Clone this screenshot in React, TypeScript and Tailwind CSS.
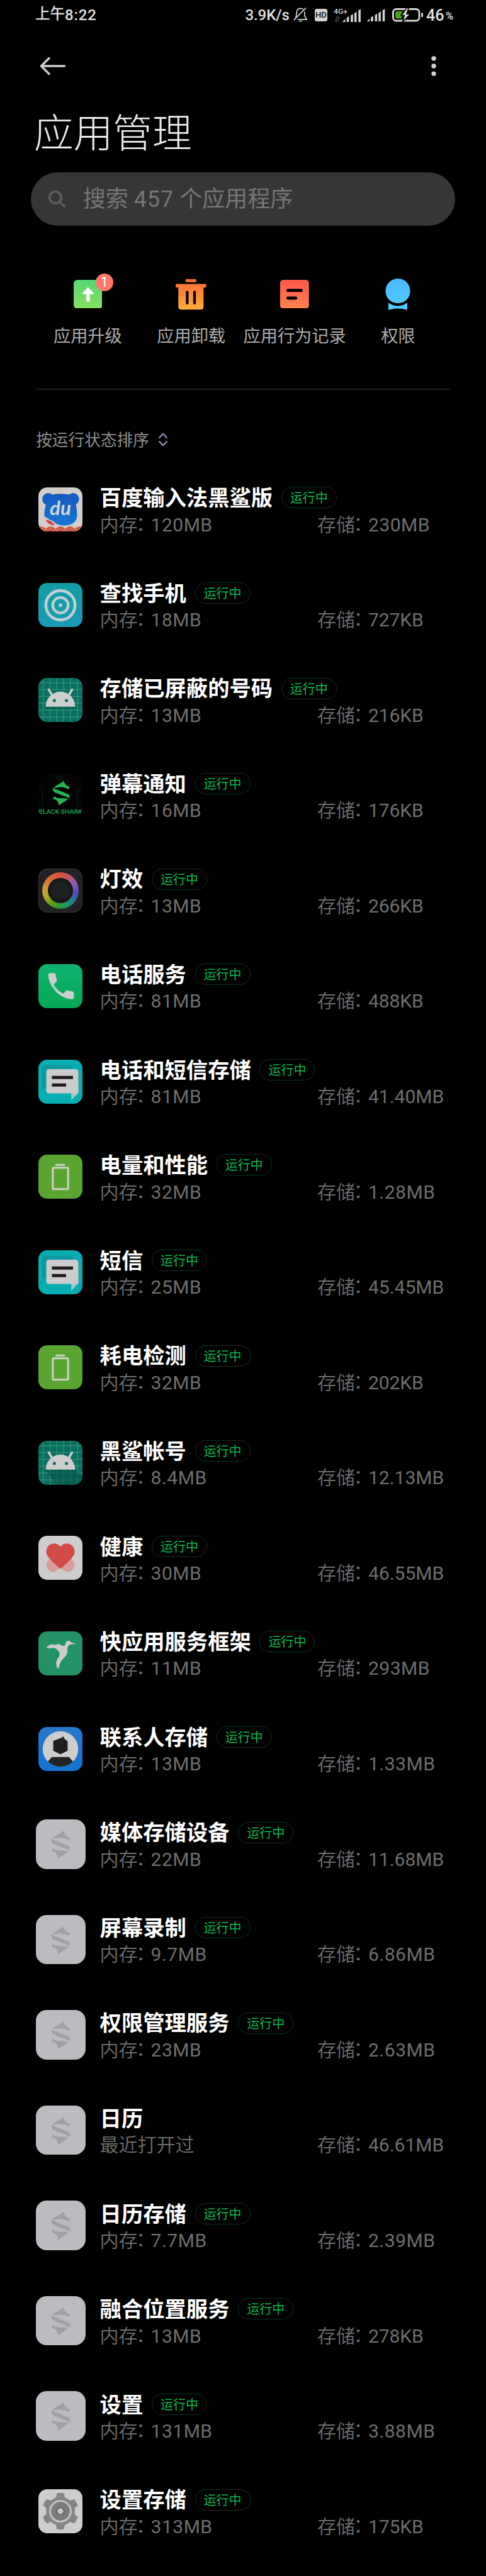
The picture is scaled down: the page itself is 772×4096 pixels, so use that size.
import React from "react";

const SHARK = (
  <>
    <path d="M60 25L67 36L77 41.5L72 46.5Q66 41.5 52 41L36 43Q42 37 52 32Q58 29 60 25Z" />
    <path d="M35 43L40 45.5L73 59Q77 62 76 69L40 55Q33 51 35 43Z" />
    <path d="M34 70L40 63.5Q41 69 50 69L73 70Q66 77 60 80L49.500 87L47.500 78Q42 72 34 70Z" />
  </>
);

function Tile({ bg, children }: { bg: string; children?: React.ReactNode }) {
  return (
    <div className={`h-[70px] w-[70px] overflow-hidden rounded-[14px] ${bg}`}>
      <svg viewBox="0 0 98 98" className="block h-full w-full">
        {children}
      </svg>
    </div>
  );
}

function BaiduIcon() {
  return (
    <Tile bg="bg-[#d2cecb]">
      <g fill="none" stroke="#d8c39a" strokeWidth="1.300">
        <path d="M34 22L49 4L64 22M4 40L-2 50L14 68M94 36L100 48L86 66" />
      </g>
      <g fill="#155fc4">
        <circle cx="22" cy="26" r="13.500" />
        <circle cx="77" cy="26" r="13.500" />
      </g>
      <path
        d="M30 16Q49 13 69 16Q84 24 84 42Q86 50 86 63Q85 84 57 85Q40 85 34 76Q24 72 13 64Q13 50 16 42Q15 26 30 16Z"
        fill="url(#baiduBody)"
      />
      <defs>
        <linearGradient id="baiduBody" x1="0" y1="0" x2="0" y2="1">
          <stop offset="0" stopColor="#1559bf" />
          <stop offset="1" stopColor="#1877d6" />
        </linearGradient>
      </defs>
      <path d="M16 72Q30 73 36 84Q22 84 16 72Z" fill="#c9403f" />
      <text x="49" y="62" textAnchor="middle" fontSize="44" fontWeight="700" fontStyle="italic" fill="#d3d6da" className="font-['Lato']">
        du
      </text>
      <g fill="#c94b3d" stroke="#dd9a78" strokeWidth="1.500">
        {[6, 49, 92, 27, 70].map((x) => (
          <g key={x}>
            <circle cx={x} cy="100" r="13" />
            <circle cx={x} cy="100" r="8" />
          </g>
        ))}
      </g>
    </Tile>
  );
}

function FindIcon() {
  return (
    <Tile bg="bg-linear-to-b from-[#129da2] to-[#1a9ab6]">
      <g fill="none" stroke="#bfcfcf">
        <circle cx="49" cy="49.500" r="32.500" strokeWidth="6.500" />
        <circle cx="49" cy="49.500" r="17.200" strokeWidth="6" />
      </g>
      <circle cx="49" cy="49.500" r="4" fill="#c9cfcf" />
    </Tile>
  );
}

function AndroidIcon({ shadow }: { shadow?: boolean }) {
  return (
    <Tile bg="bg-[#08705f]">
      <path
        d="M10.500 0V98M26 0V98M41 0V98M56 0V98M71.500 0V98M87 0V98M0 11H98M0 26H98M0 41H98M0 56H98M0 71.500H98M0 87H98"
        stroke="#4f9d8e"
        strokeWidth="1.200"
      />
      {shadow ? <path d="M16 64H82L98 80V98H40Z" fill="#035246" opacity=".55" /> : <path d="M16 64H82L80 69H20Z" fill="#035246" opacity=".5" />}
      <path d="M23 26L31 39M75 26L67 39" stroke="#cdcdcd" strokeWidth="5" strokeLinecap="round" />
      <path d="M16 64Q17 45 31 36Q49 25 67 36Q81 45 82 64Z" fill="#cdcdcd" />
      <circle cx="35.500" cy="50.500" r="3.500" fill="#08705f" />
      <circle cx="62.500" cy="50.500" r="3.500" fill="#08705f" />
    </Tile>
  );
}

function BlackSharkIcon() {
  return (
    <Tile bg="bg-[#010403]">
      <path d="M35 0L46 16V2M62 0L51 16V2M0 30L9 38V72L0 80M98 30L87 38V72L98 80" fill="none" stroke="#0c2c1c" strokeWidth="1.200" />
      <g fill="#25b352" transform="translate(1 -6) scale(.9 .88)">
        {SHARK}
      </g>
      <text x="49" y="89" textAnchor="middle" fontSize="12" fontWeight="500" textLength="97" lengthAdjust="spacingAndGlyphs" fill="#22a54b" className="font-['Roboto']">
        BLACK SHARK
      </text>
    </Tile>
  );
}

function LightIcon() {
  return (
    <div className="flex h-[70px] w-[70px] items-center justify-center rounded-[14px] border border-[#37373c] bg-[#222226]">
      <div className="flex h-[58px] w-[58px] items-center justify-center rounded-full bg-[conic-gradient(#d8503c,#c2555c_30deg,#8f5cb4_60deg,#5a48c0_100deg,#1f7f8c_130deg,#1f9a62_160deg,#2d9a26_190deg,#5f9f1c_215deg,#b0a82c_245deg,#cf9a35_280deg,#d86a35_315deg,#d8503c)]">
        <div className="flex h-[40px] w-[40px] items-center justify-center rounded-full bg-[#17191b]">
          <div className="h-[30px] w-[30px] rounded-full bg-[#1e2122]" />
        </div>
      </div>
    </div>
  );
}

function PhoneIcon() {
  return (
    <Tile bg="bg-linear-to-b from-[#0fb36f] to-[#04a853]">
      <path
        d="M26 20H35Q37 20 37.500 22L41.500 37L34 45Q41 59 56 66L62 58L76 61Q79 62 79 64V75Q79 78 75 78Q52 77 36 58Q22 40 22 24Q22 20 26 20Z"
        fill="#cdcdcd"
      />
      <path d="M34 45Q37 51 42 56L37 59Q32 54 29 48Z" fill="#9ecfc0" />
    </Tile>
  );
}

function MessageIcon() {
  return (
    <Tile bg="bg-[#07adb1]">
      <rect x="8" y="12" width="69" height="51" rx="7" fill="#0d9a9f" />
      <path d="M73 74H89L73 90Z" fill="#a3c8c8" />
      <rect x="17.500" y="21" width="71.500" height="54" rx="6" fill="#cdcbcd" />
      <path d="M82 74H89V68Z" fill="#cdcbcd" />
      <path d="M30 39.700H77M30 56.500H61.500" stroke="#1d1d1f" strokeWidth="7" />
    </Tile>
  );
}

function BatteryIcon() {
  return (
    <Tile bg="bg-[#5ba431]">
      <rect x="38" y="20.500" width="21" height="4.500" rx="1" fill="#cdd3c6" />
      <rect x="32" y="29" width="34" height="47.500" rx="1.500" fill="none" stroke="#cdd3c6" strokeWidth="4.200" />
    </Tile>
  );
}

function HealthIcon() {
  return (
    <Tile bg="bg-[#cdcdcd]">
      <path d="M49 52Q36 44 24 52Q14 62 20 73Q30 86 43 76L49 72L55 76Q68 86 78 73Q84 62 74 52Q62 44 49 52Z" fill="#d99c9b" />
      <path d="M49 24Q41 15 30 18Q17 22 17.500 38Q19 48 49 73.500Q79 48 80.500 38Q81 22 68 18Q57 15 49 24Z" fill="#d34b47" />
    </Tile>
  );
}

function BirdIcon() {
  return (
    <Tile bg="bg-[#249267]">
      <path
        d="M17.500 36Q24 28 32 29Q39 31 45 27.500Q50 32 57 33Q60 31 60.500 27Q62 21 67 21Q71 21 74 25L83.500 28L70 29Q65 31 64.500 40Q66 50 58 58Q48 67 47 75L44 84Q38 76 40 66Q42 61 46 56Q49 48 44 43Q38 36 30 37Q23 38 17.500 36Z"
        fill="#cdcdcd"
      />
    </Tile>
  );
}

function ContactIcon() {
  return (
    <Tile bg="bg-linear-to-b from-[#2878cc] to-[#1273d2]">
      <defs>
        <clipPath id="contactDisc">
          <circle cx="49" cy="49" r="39.500" />
        </clipPath>
      </defs>
      <circle cx="49" cy="49" r="39.500" fill="#cdcdcd" />
      <path d="M33 31L49 25Q54 24 55 20Q56 26 65 32V53L49 61L33 53Z" fill="#1f1f20" />
      <path d="M30 67H68L80 80V98H18V80Z" fill="#232324" clipPath="url(#contactDisc)" />
    </Tile>
  );
}

function GearIcon() {
  return (
    <Tile bg="bg-[#cdcdcd]">
      {[0, 60, 120].map((a) => (
        <path key={a} d="M41 9Q49 7 57 9L60 24V74L57 89Q49 91 41 89L38 74V24Z" fill="#858585" transform={`rotate(${a} 49 49)`} />
      ))}
      <circle cx="49" cy="49" r="32" fill="#858585" />
      <circle cx="49" cy="49" r="23" fill="#7c7c7c" stroke="#c4c4c4" strokeWidth="4" />
      <circle cx="49" cy="49" r="8" fill="#c6c6c6" stroke="#686868" strokeWidth="3" />
    </Tile>
  );
}

function DefaultIcon() {
  return (
    <div className="h-[78.600px] w-[78.600px] rounded-[17px] bg-[#bcbbc0]">
      <svg viewBox="0 0 110 110" className="block h-full w-full" fill="#a1a0a4">
        {SHARK}
      </svg>
    </div>
  );
}

type App = {
  name: string;
  icon: React.ReactNode;
  mem: string | null;
  size: string;
};

const APPS: App[] = [
  { name: "百度输入法黑鲨版", icon: <BaiduIcon />, mem: "120MB", size: "230MB" },
  { name: "查找手机", icon: <FindIcon />, mem: "18MB", size: "727KB" },
  { name: "存储已屏蔽的号码", icon: <AndroidIcon />, mem: "13MB", size: "216KB" },
  { name: "弹幕通知", icon: <BlackSharkIcon />, mem: "16MB", size: "176KB" },
  { name: "灯效", icon: <LightIcon />, mem: "13MB", size: "266KB" },
  { name: "电话服务", icon: <PhoneIcon />, mem: "81MB", size: "488KB" },
  { name: "电话和短信存储", icon: <MessageIcon />, mem: "81MB", size: "41.40MB" },
  { name: "电量和性能", icon: <BatteryIcon />, mem: "32MB", size: "1.28MB" },
  { name: "短信", icon: <MessageIcon />, mem: "25MB", size: "45.45MB" },
  { name: "耗电检测", icon: <BatteryIcon />, mem: "32MB", size: "202KB" },
  { name: "黑鲨帐号", icon: <AndroidIcon shadow />, mem: "8.4MB", size: "12.13MB" },
  { name: "健康", icon: <HealthIcon />, mem: "30MB", size: "46.55MB" },
  { name: "快应用服务框架", icon: <BirdIcon />, mem: "11MB", size: "293MB" },
  { name: "联系人存储", icon: <ContactIcon />, mem: "13MB", size: "1.33MB" },
  { name: "媒体存储设备", icon: <DefaultIcon />, mem: "22MB", size: "11.68MB" },
  { name: "屏幕录制", icon: <DefaultIcon />, mem: "9.7MB", size: "6.86MB" },
  { name: "权限管理服务", icon: <DefaultIcon />, mem: "23MB", size: "2.63MB" },
  { name: "日历", icon: <DefaultIcon />, mem: null, size: "46.61MB" },
  { name: "日历存储", icon: <DefaultIcon />, mem: "7.7MB", size: "2.39MB" },
  { name: "融合位置服务", icon: <DefaultIcon />, mem: "13MB", size: "278KB" },
  { name: "设置", icon: <DefaultIcon />, mem: "131MB", size: "3.88MB" },
  { name: "设置存储", icon: <GearIcon />, mem: "313MB", size: "175KB" },
];

function Stat({ label, value }: { label: string; value: string }) {
  const tracking = value.length > 6 ? "tracking-[0]" : value.endsWith("KB") ? "tracking-[-0.100px]" : "tracking-[0.500px]";
  return (
    <span>
      {label}
      <span className="-ml-[2.500px] inline-block w-[23.500px] -translate-y-[2px] overflow-visible leading-none">：</span>
      <span className={`font-['Roboto','Noto_Sans_CJK_SC',sans-serif] leading-none font-normal ${tracking}`}>{value}</span>
    </span>
  );
}

function AppRow({ app }: { app: App }) {
  return (
    <li className="flex h-[151.580px] items-center">
      <div className="ml-[57.200px] flex w-[78.600px] shrink-0 items-center justify-center">{app.icon}</div>
      <div className="mb-[1.200px] ml-[22.800px] flex-1">
        <div className="flex h-[44px] items-center">
          <span className="text-[34.320px] leading-[44px] font-bold whitespace-nowrap text-white">{app.name}</span>
          {app.mem && (
            <span className="mt-[4.600px] ml-[13.700px] flex h-[34px] w-[88px] items-center justify-center rounded-full border-[1.500px] border-[#0d3020] text-[20px] leading-none text-[#0ab94d]">
              <span>运行中</span>
            </span>
          )}
        </div>
        <div className="flex h-[40.800px] items-center text-[30px] leading-[40px] font-[350] whitespace-nowrap text-[#6e6e6e]">
          <div className="w-[345.400px]">{app.mem ? <Stat label="内存" value={app.mem} /> : <span>最近打开过</span>}</div>
          <Stat label="存储" value={app.size} />
        </div>
      </div>
    </li>
  );
}

function Signal({ className }: { className: string }) {
  return (
    <svg viewBox="0 0 41 29" className={className} fill="#d4d4d4">
      <path d="M0 29L7 22V29ZM10 19L15 16V29H10ZM19 14L24 11V29H19ZM27 9L32 6V29H27ZM36 3L41 0V29H36Z" />
    </svg>
  );
}

function StatusBar() {
  return (
    <div className="flex h-[48px] items-center pl-[56px] font-['Roboto','Noto_Sans_CJK_SC',sans-serif] text-[24px] leading-none font-medium text-[#e2e2e2]">
      <div className="flex w-[333.500px] items-center">
        <span className="mb-[2px] text-[23.500px]">上午</span>
        <span className="tracking-[0.900px]">8:22</span>
      </div>
      <span className="w-[76px] tracking-[-0.100px] whitespace-nowrap">3.9K/s</span>
      <svg viewBox="0 0 32 33" className="h-[23.500px] w-[22.900px]" fill="none" stroke="#d4d4d4" strokeWidth="2.400">
        <path d="M1 28L28 1M5 23Q7 20 7 13Q7 2 16 2Q20 2 22 4M25 9V16Q25 20 30 27H10" />
        <path d="M11 29.500H21Q16 34 11 29.500Z" fill="#d4d4d4" stroke="none" />
      </svg>
      <svg viewBox="0 0 28 28" className="ml-[11.500px] h-[20px] w-[20px]">
        <rect width="28" height="28" rx="5" fill="#d4d4d4" />
        <text x="14" y="20" textAnchor="middle" fontSize="17" fontWeight="500" textLength="25" lengthAdjust="spacingAndGlyphs" fill="#111">
          HD
        </text>
      </svg>
      <svg viewBox="0 0 60 38" className="mb-[4.300px] ml-[10.500px] h-[27.200px] w-[42.900px]" fill="#d4d4d4">
        <text x="0" y="19" fontSize="16.500" fontWeight="500" textLength="31" lengthAdjust="spacingAndGlyphs">
          4G+
        </text>
        <g fill="none" stroke="#4a4a4a" strokeWidth="2">
          <path d="M6 26V37L2.500 33M10 37V26L13.500 30" />
        </g>
        <path d="M19 38L26 31V38ZM29 28L34 25V38H29ZM38 23L43 20V38H38ZM46 18L51 15V38H46ZM55 12L60 9V38H55Z" />
      </svg>
      <Signal className="ml-[9px] h-[20.700px] w-[29.300px]" />
      <svg viewBox="0 0 69 30" className="ml-[11px] h-[21.500px] w-[49.400px]">
        <rect x="2" y="2" width="58" height="26" rx="7" fill="none" stroke="#d4d4d4" strokeWidth="4" />
        <rect x="64.500" y="10" width="4" height="10" rx="2" fill="#d4d4d4" />
        <path d="M10 7H24L18 16L22 17L20 23H10Q7 23 7 20V10Q7 7 10 7Z" fill="#48a11a" />
        <path d="M33 -1L20 16H27L23 31L40 13H32L37 -1Z" fill="#d4d4d4" stroke="#000" strokeWidth="2" />
      </svg>
      <span className="ml-[5px] text-[25px]">46</span>
      <span className="mt-[5px] ml-[2.500px] text-[16.500px]">%</span>
    </div>
  );
}

function Action({ label, children }: { label: string; children: React.ReactNode }) {
  return (
    <div className="flex flex-1 flex-col items-center">
      <div className="relative flex h-[50px] items-center justify-center">{children}</div>
      <span className="mt-[21px] mb-[1.600px] text-[27.200px] leading-[36px] whitespace-nowrap text-[#acacac]">{label}</span>
    </div>
  );
}

export default function App() {
  return (
    <div className="h-[4096px] w-[772px] overflow-hidden bg-black font-['Noto_Sans_CJK_SC',sans-serif]">
      <StatusBar />
      <header className="flex h-[113px] items-center justify-between pr-[79.500px] pl-[62.500px]">
        <svg viewBox="0 0 42 30" className="h-[30px] w-[42px]" fill="none" stroke="#cfcfcf" strokeWidth="3.400" strokeLinecap="round" strokeLinejoin="round">
          <path d="M15 2.500L2.500 15L15 27.500M3 15H39.500" />
        </svg>
        <svg viewBox="0 0 8 32" className="h-[32px] w-[8px]" fill="#d4d4d4">
          <circle cx="4" cy="3.900" r="3.700" />
          <circle cx="4" cy="16" r="3.700" />
          <circle cx="4" cy="28.100" r="3.700" />
        </svg>
      </header>
      <h1 className="flex h-[98.600px] items-center pb-[6px] pl-[54px] text-[62.700px] leading-none font-light text-[#ececec]">应用管理</h1>
      <div className="mt-[14px] ml-[49.200px] flex h-[85.800px] w-[673.500px] items-center rounded-full bg-[#363636]">
        <svg viewBox="0 0 28 28" className="ml-[28px] h-[28px] w-[28px]" fill="none" stroke="#5e5e5e" strokeWidth="3.600" strokeLinecap="round">
          <circle cx="11" cy="12" r="9.300" />
          <path d="M18 19.500L25.500 26" />
        </svg>
        <span className="mt-[2px] ml-[26.500px] font-['Roboto','Noto_Sans_CJK_SC',sans-serif] text-[36px] leading-[48px] whitespace-nowrap text-[#767676]">
          搜索 <span className="tracking-[1px]">457</span> 个应用程序
        </span>
      </div>
      <nav className="mt-[83.200px] ml-[57.200px] flex w-[657.300px]">
        <Action label="应用升级">
          <svg viewBox="0 0 64 64" className="h-[45.700px] w-[45.700px]">
            <defs>
              <linearGradient id="upgrade" x1="0" y1="0" x2="0" y2="1">
                <stop offset="0" stopColor="#55d774" />
                <stop offset="1" stopColor="#86e062" />
              </linearGradient>
            </defs>
            <rect width="64" height="64" rx="8" fill="url(#upgrade)" />
            <path d="M32 16L44 29Q46 32 42 32H36V48.500H28V32H22Q18 32 20 29Z" fill="#fff" />
          </svg>
          <span className="absolute -top-[8px] left-[35px] flex h-[28.600px] w-[28.600px] items-center justify-center rounded-full bg-[#ff7a68] font-['Roboto'] text-[22px] leading-none text-white">
            1
          </span>
        </Action>
        <Action label="应用卸载">
          <svg viewBox="0 0 68 70" className="h-[50px] w-[48.600px]">
            <defs>
              <linearGradient id="trash" x1="0" y1="0" x2="0" y2="70" gradientUnits="userSpaceOnUse">
                <stop offset="0" stopColor="#ff6a35" />
                <stop offset="1" stopColor="#ffab3c" />
              </linearGradient>
            </defs>
            <g fill="url(#trash)">
              <rect x="22" y="1" width="24" height="7" rx="2.500" />
              <path d="M2 12H66Q68 12 68 14V18Q68 20 66 20H62V63Q62 69 56 69H12Q6 69 6 63V20H2Q0 20 0 18V14Q0 12 2 12Z" />
            </g>
            <path d="M25.700 30V54.500M42 30V54.500" stroke="#000" strokeWidth="6" strokeLinecap="round" />
          </svg>
        </Action>
        <Action label="应用行为记录">
          <svg viewBox="0 0 64 64" className="h-[45.700px] w-[45.700px]">
            <defs>
              <linearGradient id="record" x1="0" y1="0" x2="0" y2="1">
                <stop offset="0" stopColor="#fd564c" />
                <stop offset="1" stopColor="#ff8450" />
              </linearGradient>
            </defs>
            <rect width="64" height="64" rx="7" fill="url(#record)" />
            <rect x="14" y="20" width="36" height="7" rx="3" />
            <rect x="14" y="37" width="24" height="7" rx="3" />
          </svg>
        </Action>
        <Action label="权限">
          <svg viewBox="0 0 56 70" className="h-[50px] w-[40px]">
            <defs>
              <linearGradient id="badge" x1="0" y1="0" x2="0" y2="70" gradientUnits="userSpaceOnUse">
                <stop offset="0" stopColor="#4db8ff" />
                <stop offset="1" stopColor="#4fceff" />
              </linearGradient>
            </defs>
            <path d="M7 50H49V68Q49 71 46 69Q28 64 10 69Q7 71 7 68Z" fill="url(#badge)" />
            <circle cx="28" cy="27.500" r="33.500" fill="#000" />
            <circle cx="28" cy="27.500" r="27.500" fill="url(#badge)" />
          </svg>
        </Action>
      </nav>
      <div className="mt-[67.300px] ml-[57.200px] h-[1.400px] w-[657.700px] bg-[#1c1c1c]" />
      <div className="mt-[59.100px] flex h-[40px] items-center pl-[57.200px]">
        <span className="mb-[3px] text-[25.700px] leading-[37px] text-[#8e8e8e]">按运行状态排序</span>
        <svg viewBox="0 0 16 22" className="ml-[14px] h-[22px] w-[16px]" fill="none" stroke="#8c8cb0" strokeWidth="2.400">
          <path d="M1.500 8.500L8 2L14.500 8.500M1.500 13.500L8 20L14.500 13.500" />
        </svg>
      </div>
      <ul className="mt-[15.400px]">
        {APPS.map((app) => (
          <AppRow key={app.name} app={app} />
        ))}
      </ul>
    </div>
  );
}
